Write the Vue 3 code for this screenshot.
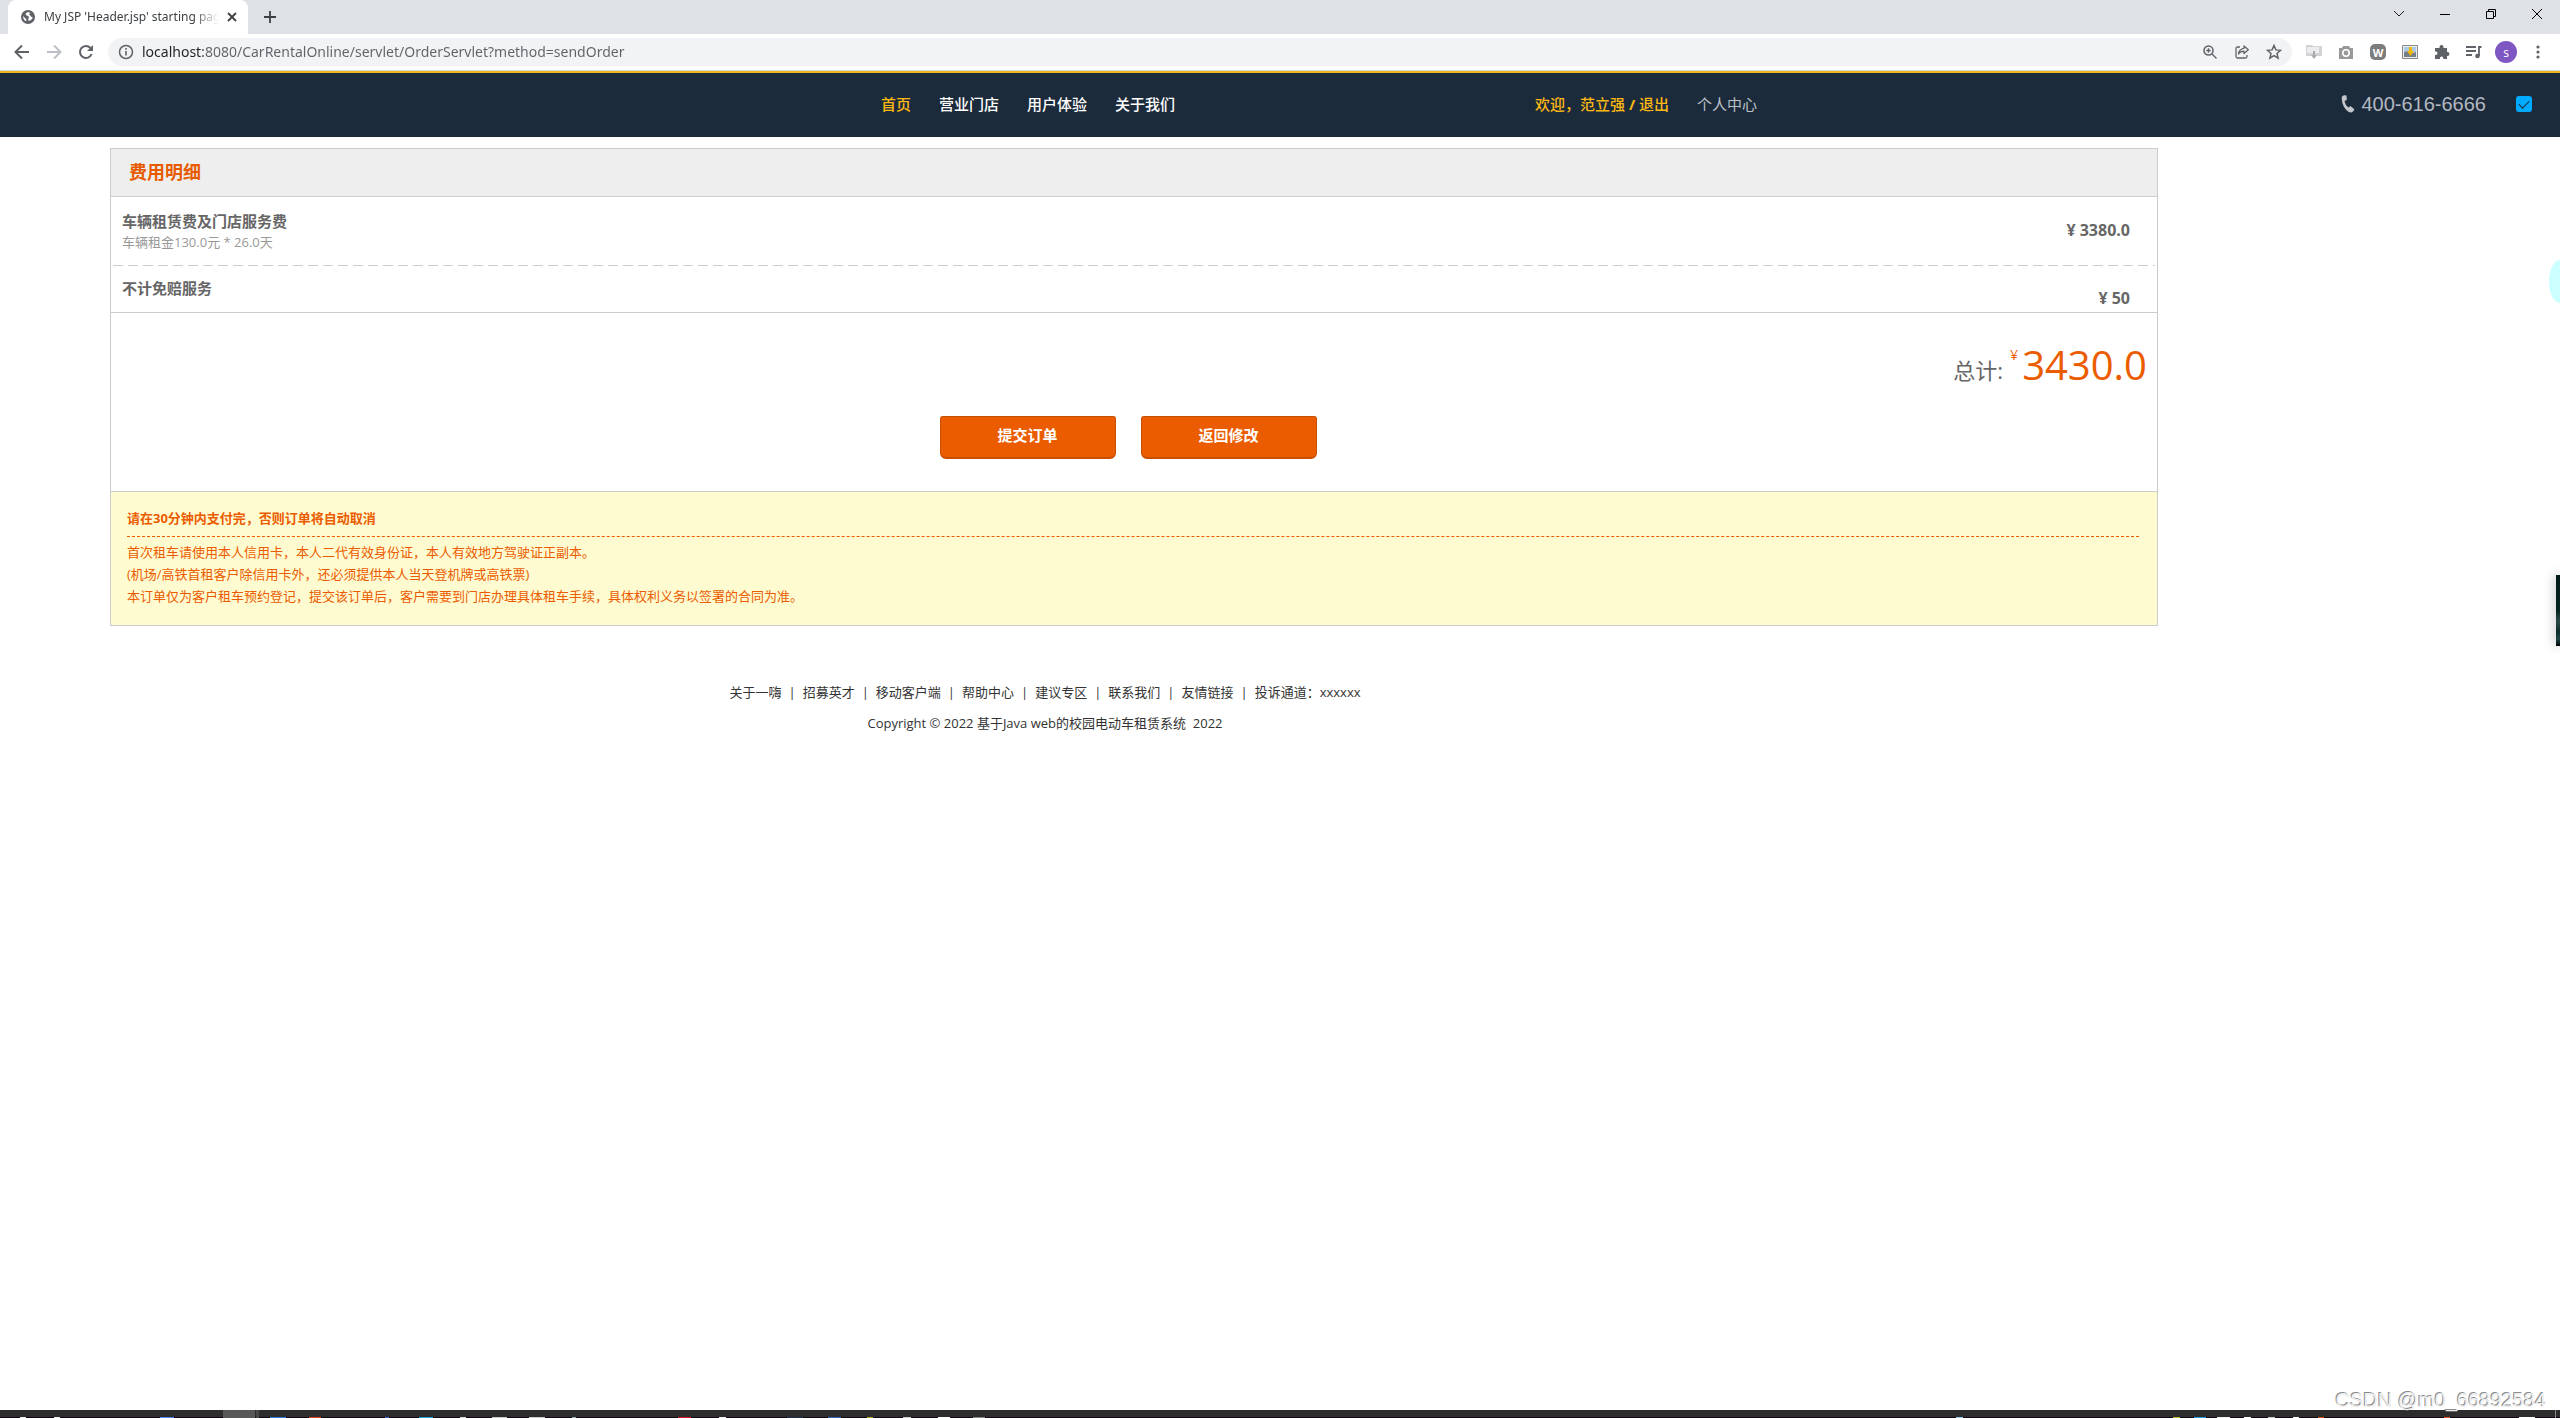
<script setup>
import { ref } from 'vue'

const address = ref('localhost:8080/CarRentalOnline/servlet/OrderServlet?method=sendOrder')
const checked = ref(true)
const navLinks = ['首页', '营业门店', '用户体验', '关于我们']
const notices = [
  '首次租车请使用本人信用卡，本人二代有效身份证，本人有效地方驾驶证正副本。',
  '(机场/高铁首租客户除信用卡外，还必须提供本人当天登机牌或高铁票)',
  '本订单仅为客户租车预约登记，提交该订单后，客户需要到门店办理具体租车手续，具体权利义务以签署的合同为准。',
]
const footerLinks = ['关于一嗨', '招募英才', '移动客户端', '帮助中心', '建议专区', '联系我们', '友情链接', '投诉通道：xxxxxx']
// [x, width, colour] of each icon's top edge in the task bar
const leftIcons = [
  [20, 6, '#eee'], [54, 6, '#eee'], [160, 14, '#4a86f0'], [270, 16, '#2f7de0'], [309, 12, '#e0401a'], [385, 4, '#3a5fd0'],
  [419, 14, '#1fa2dc'], [460, 6, '#ddd'], [492, 15, '#ccc'], [529, 16, '#ccc'], [572, 4, '#9aa'], [678, 13, '#e01028'],
  [719, 7, '#eee'], [787, 16, '#1b2f4a'], [828, 13, '#2c66b8'], [867, 6, '#b0b020'], [903, 8, '#ccc'], [938, 12, '#fff'], [973, 12, '#888'],
]
const rightIcons = [
  [56, 7, '#9cd0f0'], [273, 7, '#b8c020'], [294, 12, '#20a0e8'], [317, 13, '#eee'], [344, 7, '#fff'], [368, 7, '#ccc'],
  [393, 6, '#fff'], [418, 6, '#e05010'], [544, 6, '#f05020'], [619, 16, '#fff'],
]
</script>

<template>
  <div class="screen">
    <header class="browser">
      <div class="tabs">
        <div class="tab">
          <svg class="globe" width="14" height="14" viewBox="0 0 14 14"><circle cx="7" cy="7" r="7" fill="#5f6368" /><path d="M7.5 2c-2 .3-3.200 1.500-2.700 2.800.4 1 2.600.8 3 2 .3 1.200-.5 1.600-.6 2.600-.1.900.7 1.600 1.700 1.200 1.500-.7 2.600-2 2.700-3.700-.8.200-1.700-.2-1.900-1-.3-.9-1.400-.6-1.500-1.400 0-.7.800-.8.800-1.500zM2 6c0 2 .8 3.700 2.400 4.900.9.500 1.300-.6.900-1.400C4.800 8.400 3.600 8 2 6z" fill="#fff" /></svg>
          <span class="tab-title">My JSP 'Header.jsp' starting page</span>
          <button class="icon" aria-label="关闭标签页"><svg width="10" height="10" viewBox="0 0 10 10"><path d="M1 1l8 8M9 1l-8 8" stroke="#3c4043" stroke-width="1.800" /></svg></button>
        </div>
        <button class="icon new-tab" aria-label="打开新的标签页"><svg width="12" height="12" viewBox="0 0 12 12"><path d="M6 0v12M0 6h12" stroke="#3c4043" stroke-width="1.800" /></svg></button>
        <div class="window-buttons">
          <button class="icon" aria-label="搜索标签页"><svg width="12" height="12" viewBox="0 0 12 12"><path d="M1 3l5 5 5-5" fill="none" stroke="#222" /></svg></button>
          <button class="icon" aria-label="最小化"><svg width="12" height="12" viewBox="0 0 12 12"><path d="M1 6.500h10" stroke="#000" /></svg></button>
          <button class="icon" aria-label="还原"><svg width="12" height="12" viewBox="0 0 12 12"><path d="M1.500 3.500h7v7h-7zM3.500 3.500v-2h7v7h-2" fill="none" stroke="#000" /></svg></button>
          <button class="icon" aria-label="关闭"><svg width="12" height="12" viewBox="0 0 12 12"><path d="M1 1l10 10M11 1L1 11" stroke="#000" /></svg></button>
        </div>
      </div>
      <div class="toolbar">
        <div class="history">
          <button class="icon" aria-label="后退"><svg width="16" height="16" viewBox="0 0 16 16"><path d="M15 8H2M8 1.500L1.500 8 8 14.500" fill="none" stroke="#5f6368" stroke-width="2" /></svg></button>
          <button class="icon" aria-label="前进"><svg width="16" height="16" viewBox="0 0 16 16"><path d="M1 8h13M8 1.500L14.500 8 8 14.500" fill="none" stroke="#bdc1c6" stroke-width="2" /></svg></button>
          <button class="icon" aria-label="重新加载"><svg width="16" height="16" viewBox="0 0 16 16"><path d="M13.600 10A6 6 0 1 1 12.500 4" fill="none" stroke="#5f6368" stroke-width="2" /><path d="M15 1v6H9z" fill="#5f6368" /></svg></button>
        </div>
        <div class="omnibox">
          <svg width="16" height="16" viewBox="0 0 16 16"><circle cx="8" cy="8" r="6.500" fill="none" stroke="#5f6368" stroke-width="1.500" /><path d="M8 7v4.500M8 4v1.700" stroke="#5f6368" stroke-width="1.600" /></svg>
          <input v-model="address" class="address" aria-label="地址栏" spellcheck="false" />
          <button class="icon" aria-label="缩放"><svg width="14" height="14" viewBox="0 0 14 14"><circle cx="5.500" cy="5.500" r="4.500" fill="none" stroke="#5f6368" stroke-width="1.500" /><path d="M9 9l4.500 4.500M3.300 5.500h4.400M5.500 3.300v4.400" stroke="#5f6368" stroke-width="1.400" /></svg></button>
          <button class="icon" aria-label="分享"><svg width="14" height="14" viewBox="0 0 14 14"><path d="M5 2H2.500Q1 2 1 3.500v8Q1 13 2.500 13h8q1.500 0 1.500-1.500V10M9 1l4.300 3.800L9 8.500V6.300Q5.500 6 3.500 9 4 4 9 3.300z" fill="none" stroke="#5f6368" stroke-width="1.300" stroke-linejoin="round" /></svg></button>
          <button class="icon" aria-label="收藏"><svg width="16" height="16" viewBox="0 0 16 16"><path d="M8 1.500l1.900 4.400 4.700.4-3.600 3.100 1.100 4.700L8 11.600l-4.100 2.500L5 9.400 1.400 6.300l4.700-.4z" fill="none" stroke="#5f6368" stroke-width="1.500" /></svg></button>
        </div>
        <div class="extensions">
          <button class="icon" aria-label="下载扩展"><svg width="16" height="16" viewBox="0 0 16 16"><path d="M0 1h6l1 1h9v10H0z" fill="#d3d3d5" /><path d="M1 3h12v6H1z" fill="#ececee" /><path d="M7 7h2v4h2l-3 4-3-4h2z" fill="#aaa" /></svg></button>
          <button class="icon" aria-label="截图扩展"><svg width="16" height="16" viewBox="0 0 16 16"><path d="M1 4h3l1-2h6l1 2h3v11H1z" fill="#999" /><circle cx="8" cy="9" r="3.200" fill="#999" stroke="#fff" stroke-width="1.600" /></svg></button>
          <button class="icon word" aria-label="W 扩展">W</button>
          <button class="icon" aria-label="图片扩展"><svg width="16" height="16" viewBox="0 0 16 16"><path d="M.5 1.500h15v13H.5z" fill="#eee" stroke="#888" /><path d="M2 3h12v5H2z" fill="#a9cbe9" /><path d="M2 8l4-1 4 2 4-1v5H2z" fill="#75808a" /><path d="M7 3h3v4h2l-3.500 5L5 7h2z" fill="#f3b800" /></svg></button>
          <button class="icon" aria-label="扩展程序"><svg width="16" height="16" viewBox="0 0 16 16"><path d="M1 4h4.500V3a2 2 0 0 1 4 0v1H13v4h.5a2 2 0 0 1 0 4H13v3H9.300v-.8a1.700 1.700 0 0 0-3.400 0v.8H1v-4h.8a1.700 1.700 0 0 0 0-3.400H1z" fill="#5f6368" /></svg></button>
          <button class="icon" aria-label="媒体控制"><svg width="16" height="16" viewBox="0 0 16 16"><path d="M0 3h10M0 7h10M0 11h6M15.500 3H13v9" fill="none" stroke="#5f6368" stroke-width="1.800" /><circle cx="11.500" cy="12" r="2.300" fill="#5f6368" /></svg></button>
          <button class="icon avatar" aria-label="用户">s</button>
          <button class="icon" aria-label="菜单"><svg width="16" height="16" viewBox="0 0 16 16" fill="#5f6368"><circle cx="8" cy="3" r="1.600" /><circle cx="8" cy="8" r="1.600" /><circle cx="8" cy="13" r="1.600" /></svg></button>
        </div>
      </div>
    </header>

    <div class="site-header">
      <nav class="links">
        <a v-for="(link, i) in navLinks" :key="link" href="#" :class="{ gold: i === 0 }">{{ link }}</a>
      </nav>
      <div class="account">
        <span class="gold">欢迎，范立强 <b>/</b> <a href="#">退出</a></span>
        <a class="muted" href="#">个人中心</a>
      </div>
      <div class="hotline">
        <svg width="14" height="18" viewBox="0 0 14 18"><path d="M1 1.500Q3-.5 5.500.5l.3 4.600-2.300.9Q4 10 7.500 12.600l2-1.500 3.800 3.200Q13 17 10.500 17.600 6.500 17.500 3 12 0 6 1 1.500z" fill="#c4c6cd" /></svg>
        <span>400-616-6666</span>
        <input v-model="checked" class="check" type="checkbox" aria-label="电话咨询" />
      </div>
    </div>

    <main class="content">
      <section class="card">
        <h1>费用明细</h1>
        <div class="row rental">
          <div>
            <h2>车辆租赁费及门店服务费</h2>
            <p>车辆租金130.0元 * 26.0天</p>
          </div>
          <strong>¥ 3380.0</strong>
        </div>
        <div class="dashes"></div>
        <div class="row waiver">
          <h2>不计免赔服务</h2>
          <strong>¥ 50</strong>
        </div>
        <div class="summary">
          <div class="total">
            <span>总计:</span>
            <span class="currency">¥</span>
            <span class="amount">3430.0</span>
          </div>
          <div class="actions">
            <button type="submit">提交订单</button>
            <button type="button">返回修改</button>
          </div>
        </div>
        <div class="notice">
          <h3>请在30分钟内支付完，否则订单将自动取消</h3>
          <p v-for="line in notices" :key="line">{{ line }}</p>
        </div>
      </section>
      <footer class="footer">
        <ul>
          <li v-for="link in footerLinks" :key="link"><a href="#">{{ link }}</a></li>
        </ul>
        <p>Copyright © 2022 基于Java web的校园电动车租赁系统&nbsp; 2022</p>
      </footer>
      <div class="bubble"></div>
      <div class="dock"></div>
      <div class="watermark">CSDN @m0_66892584</div>
    </main>

    <div class="taskbar">
      <svg width="1100" height="8" viewBox="0 0 1100 8">
        <rect x="223" width="32" height="8" fill="#585858" /><rect x="256" width="3" height="8" fill="#484848" />
        <rect v-for="icon in leftIcons" :key="icon[0]" :x="icon[0]" y="7" :width="icon[1]" height="1" :fill="icon[2]" />
      </svg>
      <svg width="660" height="8" viewBox="0 0 660 8">
        <rect v-for="icon in rightIcons" :key="icon[0]" :x="icon[0]" y="7" :width="icon[1]" height="1" :fill="icon[2]" />
        <rect x="655" width="1" height="8" fill="#888" />
      </svg>
    </div>
  </div>
</template>

<style>
body {
  margin: 0;
  background: #fff;
}
</style>

<style scoped>
* {
  box-sizing: border-box;
}
.screen {
  display: flex;
  flex-direction: column;
  min-height: 100vh;
  font-family: 'Open Sans', 'Noto Sans CJK SC', sans-serif;
  font-size: 13px;
  line-height: 22px;
  color: #333;
}
a {
  color: inherit;
  text-decoration: none;
}
h1, h2, h3, p, ul {
  margin: 0;
  padding: 0;
}
button {
  font-family: inherit;
  cursor: pointer;
}
svg {
  display: block;
  flex: none;
}
.icon {
  display: flex;
  align-items: center;
  justify-content: center;
  width: 16px;
  height: 16px;
  padding: 0;
  border: 0;
  background: none;
}

/* browser window */
.tabs {
  display: flex;
  align-items: center;
  height: 34px;
  padding-left: 8px;
  background: #dee1e6;
}
.tab {
  display: flex;
  align-items: center;
  width: 240px;
  height: 34px;
  padding: 0 8px 0 13px;
  border-radius: 8px 8px 0 0;
  background: #fff;
}
.tab-title {
  flex: 1;
  margin: 0 5px 0 9px;
  overflow: hidden;
  white-space: nowrap;
  font-family: 'Noto Sans', sans-serif;
  font-size: 12px;
  color: #3c4043;
  mask-image: linear-gradient(to right, #000 85%, transparent);
}
.new-tab {
  margin-left: 14px;
}
.window-buttons {
  display: flex;
  gap: 30px;
  margin-left: auto;
  padding: 0 15px 6px 0;
}
.toolbar {
  display: flex;
  align-items: center;
  height: 37px;
  padding: 0 14px;
  border-bottom: 1px solid #d5d7da;
}
.history {
  display: flex;
  gap: 16px;
  width: 94px;
}
.omnibox {
  display: flex;
  flex: 1;
  align-items: center;
  gap: 16px;
  height: 28px;
  padding: 0 10px;
  border-radius: 14px;
  background: #f1f3f4;
}
.address {
  flex: 1;
  min-width: 0;
  height: 24px;
  margin-left: -8px;
  padding: 0 0 2px;
  border: 0;
  outline: 0;
  font-family: 'Noto Sans', sans-serif;
  font-size: 14px;
  color: transparent;
  background: linear-gradient(to right, #202124 61px, #5f6368 61px);
  background-clip: text;
}
.extensions {
  display: flex;
  align-items: center;
  gap: 16px;
  padding-left: 14px;
}
.word {
  border-radius: 5px;
  background: #7c7c7c;
  color: #fff;
  font-size: 11px;
  font-weight: 700;
}
.avatar {
  width: 22px;
  height: 22px;
  margin: 0 -3px;
  border-radius: 50%;
  background: #7e57c2;
  color: #fff;
  font-size: 12px;
}

/* site header */
.site-header {
  display: flex;
  align-items: center;
  height: 66px;
  padding: 0 28px 2px 881px;
  border-top: 2px solid #f0b41c;
  background: #1c2b3b;
  color: #fff;
  font-size: 15px;
}
.links,
.account {
  display: flex;
  gap: 28px;
  font-weight: 500;
  white-space: nowrap;
}
.account {
  margin-left: 360px;
}
.gold {
  color: #fdb913;
}
.muted {
  color: #bcc1c8;
  font-weight: 400;
}
.hotline {
  display: flex;
  align-items: center;
  margin-left: auto;
  gap: 6px;
  color: #b4b8c0;
  font-family: 'Liberation Sans', sans-serif;
  font-size: 20px;
}
.check {
  display: flex;
  align-items: center;
  justify-content: center;
  width: 16px;
  height: 16px;
  margin: 0 0 0 24px;
  border-radius: 3px;
  appearance: none;
  background: #00aaff;
}
.check:checked::after {
  content: '';
  width: 9px;
  height: 5px;
  margin-bottom: 3px;
  border: solid #1c2b3b;
  border-width: 0 0 1px 1px;
  transform: rotate(-45deg);
}

/* order card */
.content {
  position: relative;
  flex: 1;
  padding-top: 11px;
}
.card {
  width: 80%;
  margin-left: 110px;
  border: 1px solid #ccc;
}
h1 {
  padding: 12px 18px;
  border-bottom: 1px solid #ccc;
  background: #eee;
  color: #e85a00;
  font-size: 18px;
  line-height: 23px;
}
.row {
  display: flex;
  align-items: flex-start;
  justify-content: space-between;
  padding: 13px 27px 0 11px;
  color: #666;
  font-size: 16px;
}
.row h2 {
  font-size: 15px;
  line-height: 22px;
}
.row p {
  color: #999;
  font-size: 13px;
  line-height: 20px;
}
.rental {
  height: 68px;
}
.rental strong {
  padding-top: 9px;
}
.waiver {
  height: 46px;
  padding-top: 11px;
}
.waiver strong {
  padding-top: 10px;
}
.dashes {
  height: 1px;
  margin: 0 2px;
  background: repeating-linear-gradient(to right, #ccc 0 10px, transparent 10px 15px);
}
.summary {
  padding: 24px 10px 32px;
  border-top: 1px solid #ccc;
}
.total {
  display: flex;
  justify-content: flex-end;
  height: 54px;
  color: #666;
  font-size: 22px;
  line-height: 66px;
}
.currency {
  margin: 0 4px 0 7px;
  color: #eb5c00;
  font-size: 14px;
  line-height: 36px;
}
.amount {
  color: #eb5c00;
  font-size: 40px;
  line-height: 56px;
}
.actions {
  display: flex;
  justify-content: center;
  gap: 25px;
  margin-top: 25px;
  padding-right: 12px;
}
.actions button {
  width: 176px;
  height: 43px;
  padding: 0 0 5px;
  border: 1px solid #c84e00;
  border-bottom-width: 2px;
  border-radius: 3px 3px 6px 6px;
  background: #eb5c00;
  color: #fff;
  font-size: 15px;
  font-weight: 700;
}
.notice {
  padding: 15px 18px 18px 16px;
  border-top: 1px solid #ccc;
  background: #fffbd0;
  color: #eb5c00;
}
.notice h3 {
  margin-bottom: 4px;
  padding-bottom: 7px;
  border-bottom: 1px dashed #eb5c00;
  font-size: 13px;
}
.footer {
  width: calc(100% - 470px);
  padding-top: 55px;
  text-align: center;
}
.footer ul {
  display: flex;
  justify-content: center;
  list-style: none;
}
.footer li + li::before {
  content: '|';
  margin: 0 7px;
}
.footer p {
  margin-top: 9px;
}

/* floating items */
.bubble {
  position: absolute;
  top: 123px;
  right: 0;
  width: 11px;
  height: 43px;
  border-radius: 11px 0 0 11px / 22px 0 0 22px;
  background: #ccffff;
}
.dock {
  position: absolute;
  top: 438px;
  right: 0;
  width: 4px;
  height: 71px;
  background: linear-gradient(#031a17, #06241f 50%, #2a4a49 65%, #0d2c2a 80%, #1f4746 90%, #000);
  box-shadow: 0 0 12px rgba(0, 0, 0, 0.4);
}
.watermark {
  position: absolute;
  right: 14px;
  bottom: 0;
  color: #eee;
  font-family: 'Liberation Sans', sans-serif;
  font-size: 20px;
  line-height: 20px;
  text-shadow: -1px -1px 0 #8a8a8a;
}
.taskbar {
  display: flex;
  justify-content: space-between;
  overflow: hidden;
  height: 8px;
  background: linear-gradient(#2d2d2d 7px, #100810 7px);
}
</style>
